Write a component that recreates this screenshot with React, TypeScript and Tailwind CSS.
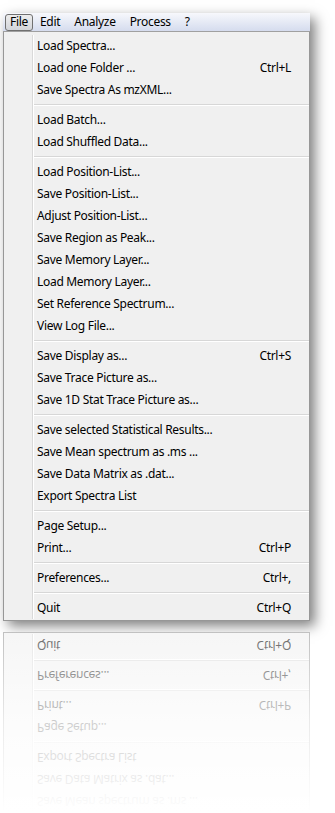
import React from 'react';

type Item = { label: string; shortcut?: string };

const sections: Item[][] = [
  [{ label: 'Load Spectra...' }, { label: 'Load one Folder ...', shortcut: 'Ctrl+L' }, { label: 'Save Spectra As mzXML...' }],
  [{ label: 'Load Batch...' }, { label: 'Load Shuffled Data...' }],
  [
    { label: 'Load Position-List...' },
    { label: 'Save Position-List...' },
    { label: 'Adjust Position-List...' },
    { label: 'Save Region as Peak...' },
    { label: 'Save Memory Layer...' },
    { label: 'Load Memory Layer...' },
    { label: 'Set Reference Spectrum...' },
    { label: 'View Log File...' },
  ],
  [{ label: 'Save Display as...', shortcut: 'Ctrl+S' }, { label: 'Save Trace Picture as...' }, { label: 'Save 1D Stat Trace Picture as...' }],
  [
    { label: 'Save selected Statistical Results...' },
    { label: 'Save Mean spectrum as .ms ...' },
    { label: 'Save Data Matrix as .dat...' },
    { label: 'Export Spectra List' },
  ],
  [{ label: 'Page Setup...' }, { label: 'Print...', shortcut: 'Ctrl+P' }],
  [{ label: 'Preferences...', shortcut: 'Ctrl+,' }],
  [{ label: 'Quit', shortcut: 'Ctrl+Q' }],
];

type Row = { kind: 'item'; item: Item } | { kind: 'sep' };

const rows: Row[] = sections.flatMap((sec, i) => {
  const items: Row[] = sec.map((item) => ({ kind: 'item', item }));
  return i === 0 ? items : [{ kind: 'sep' } as Row, ...items];
});

// only the bottom of the menu shows up in the reflection
const reflected = [...rows].reverse().slice(0, 10);

const font = { fontFamily: '"Noto Sans", "Open Sans", sans-serif' };

const MenuRow = ({ row, flipped }: { row: Row; flipped?: boolean }) => {
  if (row.kind === 'sep') {
    return (
      <div className={`h-[8px] flex flex-col justify-center ${flipped ? '-scale-y-100' : ''}`}>
        <div className="border-t border-[#d7d7d7] border-b border-b-white" />
      </div>
    );
  }
  return (
    <div
      className={`h-[22px] flex items-center justify-between pl-[3px] pr-[18px] text-[12px] tracking-[-0.3px] text-black ${flipped ? '-scale-y-100' : ''}`}
    >
      <span>{row.item.label}</span>
      {row.item.shortcut && <span>{row.item.shortcut}</span>}
    </div>
  );
};

const MenuPanel = ({ flipped }: { flipped?: boolean }) => {
  const list = flipped ? reflected : rows;
  return (
    <div
      className={`flex bg-[#f0f0f0] border-x ${flipped ? 'border-t pt-[1px]' : 'border-b pt-[3px] pb-[1px]'} border-[#979797]`}
    >
      <div className="w-[29px] border-r border-[#d9d9d9]" />
      <div className="flex-1 border-l border-white flex flex-col">
        {list.map((row, i) => (
          <MenuRow key={i} row={row} flipped={flipped} />
        ))}
      </div>
    </div>
  );
};

export default function App() {
  const menus = ['Edit', 'Analyze', 'Process', '?'];

  return (
    <div className="w-[335px] h-[813px] bg-white overflow-hidden" style={font}>
      <div className="pt-[13px] pl-[3px]">
        <div className="w-[307px] shadow-[5px_5px_12px_rgba(0,0,0,0.5)]">
          {/* menu bar */}
          <div className="h-[19px] flex items-center border-b border-[#a0a0a0] bg-gradient-to-b from-[#f7f8fc] to-[#d5dcee] text-[12px] tracking-[-0.3px] text-black">
            <div className="ml-[2px] h-[17px] flex items-center px-[4px] rounded-[3px] border border-[#707070] bg-gradient-to-b from-[#ededed] to-[#d3d5da]">
              File
            </div>
            {menus.map((m) => (
              <span key={m} className="px-[7px]">
                {m}
              </span>
            ))}
          </div>
          <MenuPanel />
        </div>

        {/* reflection */}
        <div className="relative w-[307px] mt-[11px]">
          <MenuPanel flipped />
          <div className="absolute inset-0 bg-gradient-to-b from-white/40 via-white/80 to-white" />
        </div>
      </div>
    </div>
  );
}
